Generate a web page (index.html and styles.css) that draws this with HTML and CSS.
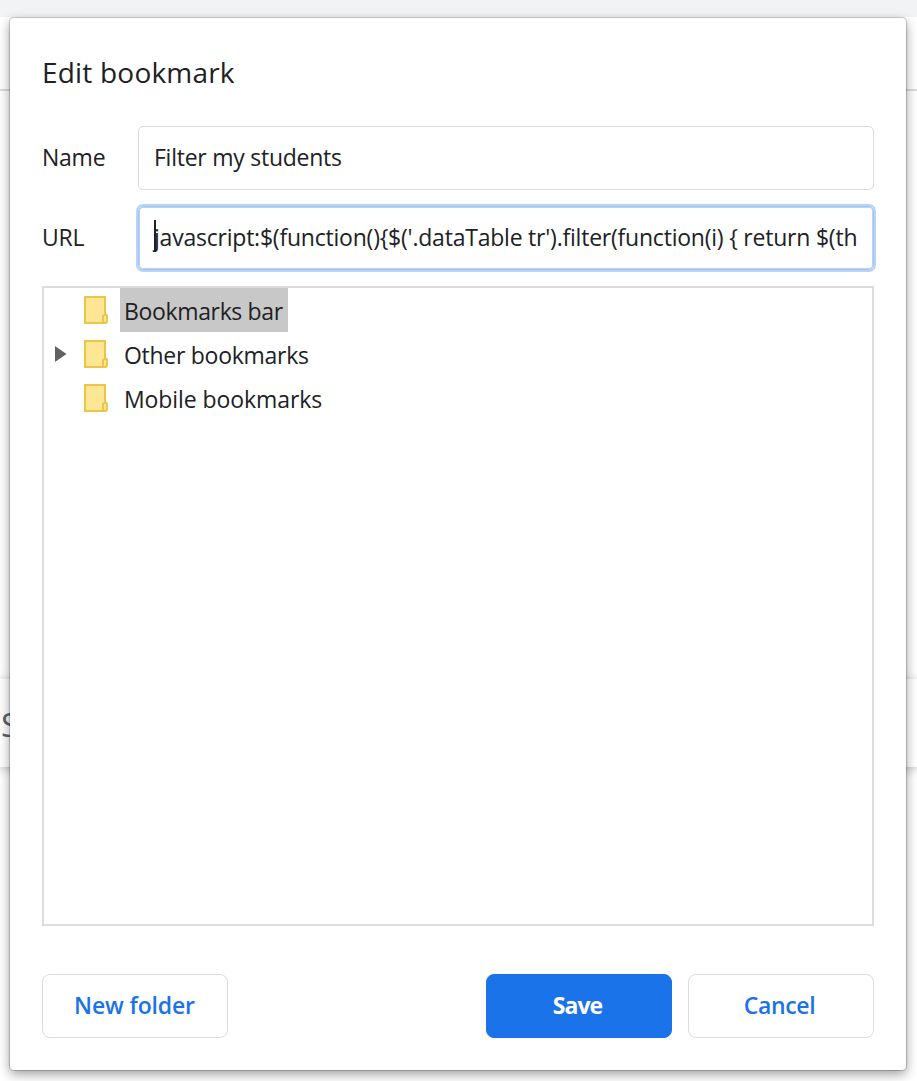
FILE: index.html
```html
<!DOCTYPE html>
<html lang="en">
<head>
<meta charset="utf-8">
<title>Edit bookmark</title>
<link rel="stylesheet" href="styles.css">
</head>
<body>
<div class="page">
  <div class="tab-strip"></div>
  <div class="toolbar"></div>
  <div class="content"><div class="card">S</div></div>
</div>
<main class="dialog">
  <h1 class="title"><span class="t-title">Edit bookmark</span></h1>
  <div class="field">
    <span class="label"><span class="t-name">Name</span></span>
    <div class="input"><span class="t-filter">Filter my students</span></div>
  </div>
  <div class="field">
    <span class="label"><span class="t-url">URL</span></span>
    <div class="input focused"><i class="caret"></i><span class="t-code">javascript:$(function(){$('.dataTable tr').filter(function(i) { return $(th</span></div>
  </div>
  <div class="tree">
    <div class="row">
      <span class="arrow"></span>
      <svg class="folder" viewBox="0 0 24 28"><path d="M1 1H21V18.500Q23 18.500 23 20.500V25Q23 27 21 27H1Z" fill="#ffe694" stroke="#e9c646" stroke-width="2"/><path d="M21 19Q19 19 19 21V27" fill="none" stroke="#e9c646" stroke-width="2"/></svg>
      <span class="node selected"><span class="t-bar">Bookmarks bar</span></span>
    </div>
    <div class="row">
      <span class="arrow"><svg width="12" height="16" viewBox="0 0 12 16"><path d="M0 0L11.500 8L0 16Z" fill="#5f6163"/></svg></span>
      <svg class="folder" viewBox="0 0 24 28"><path d="M1 1H21V18.500Q23 18.500 23 20.500V25Q23 27 21 27H1Z" fill="#ffe694" stroke="#e9c646" stroke-width="2"/><path d="M21 19Q19 19 19 21V27" fill="none" stroke="#e9c646" stroke-width="2"/></svg>
      <span class="node"><span class="t-other">Other bookmarks</span></span>
    </div>
    <div class="row">
      <span class="arrow"></span>
      <svg class="folder" viewBox="0 0 24 28"><path d="M1 1H21V18.500Q23 18.500 23 20.500V25Q23 27 21 27H1Z" fill="#ffe694" stroke="#e9c646" stroke-width="2"/><path d="M21 19Q19 19 19 21V27" fill="none" stroke="#e9c646" stroke-width="2"/></svg>
      <span class="node"><span class="t-mobile">Mobile bookmarks</span></span>
    </div>
  </div>
  <div class="actions">
    <button class="button"><span class="t-new">New folder</span></button>
    <button class="button primary"><span class="t-save">Save</span></button>
    <button class="button"><span class="t-cancel">Cancel</span></button>
  </div>
</main>
</body>
</html>
```
FILE: styles.css
```css
* { box-sizing: border-box; }
body {
  margin: 0;
  height: 1081px;
  overflow: hidden;
  position: relative;
  background: #fff;
  color: #202124;
  font: 23px/32px "Open Sans", "Noto Sans", sans-serif;
}
.page { height: 1081px; display: flex; flex-direction: column; }
.tab-strip { height: 17px; background: #f1f3f4; }
.toolbar { height: 74px; border-bottom: 2px solid #dadce0; }
.content { flex: 1; padding-top: 588px; }
.card {
  height: 88px;
  padding-left: 1px;
  background: #fff;
  box-shadow: 0 2px 10px rgba(0, 0, 0, .26);
  color: #5f6368;
  font-size: 33px;
  line-height: 92px;
}
.dialog {
  position: absolute;
  left: 10px;
  top: 18px;
  width: 896px;
  height: 1052px;
  padding: 32px;
  display: flex;
  flex-direction: column;
  background: #fff;
  border-radius: 4px;
  box-shadow: 0 0 0 1px rgba(0, 0, 0, .18), 0 4px 12px rgba(0, 0, 0, .4);
}
.title { margin: 0 0 32px; height: 44px; font-size: 28px; line-height: 44px; font-weight: 400; }
.title, .label, .input, .node, .button { white-space: pre; }
.field { display: flex; align-items: center; height: 64px; margin-bottom: 16px; }
.label { flex: none; width: 96px; padding-bottom: 2px; }
.input {
  flex: 1;
  min-width: 0;
  display: flex;
  align-items: center;
  height: 64px;
  padding: 0 0 2px 15px;
  border: 1px solid #dadce0;
  border-radius: 5px;
}
.focused {
  position: relative;
  border-color: #a3c4f1;
  box-shadow: 0 0 0 2px #b9d4f6, inset 0 0 0 1px #b9d4f6;
}
.caret { position: absolute; left: 15px; top: 13px; width: 2px; height: 32px; background: #202124; }
.tree { height: 640px; border: 2px solid #dadce0; margin-bottom: 48px; }
.row { display: flex; height: 44px; }
.arrow { width: 40px; height: 44px; padding: 14px 0 0 11px; line-height: 0; }
.folder { width: 24px; height: 28px; margin: 8px 12px 0 0; }
.node { height: 44px; width: 168px; padding: 0 4px; line-height: 47px; }
.selected { background: #c8c8c8; }
.actions { display: flex; gap: 16px; }
.button {
  width: 186px;
  height: 64px;
  padding: 0 1px 2px 0;
  border: 1px solid #dadce0;
  border-radius: 8px;
  background: #fff;
  color: #1a73e8;
  font: 600 23px/60px "Open Sans", "Noto Sans", sans-serif;
}
.primary { margin-left: auto; padding-right: 3px; background: #1a73e8; border-color: #1a73e8; color: #fff; }
.t-title { letter-spacing: .2px; }
.t-name { letter-spacing: -.25px; }
.t-url { letter-spacing: -.2px; }
.t-filter { letter-spacing: -.25px; }
.t-code { letter-spacing: -.22px; }
.t-bar { letter-spacing: -.35px; }
.t-other { letter-spacing: -.28px; }
.t-mobile { letter-spacing: -.08px; }
.t-new { letter-spacing: -.15px; }
.t-save, .t-cancel { letter-spacing: -.35px; }
.t-save { font-weight: 700; letter-spacing: -.9px; }
.t-cancel { margin-right: 2px; }
```
